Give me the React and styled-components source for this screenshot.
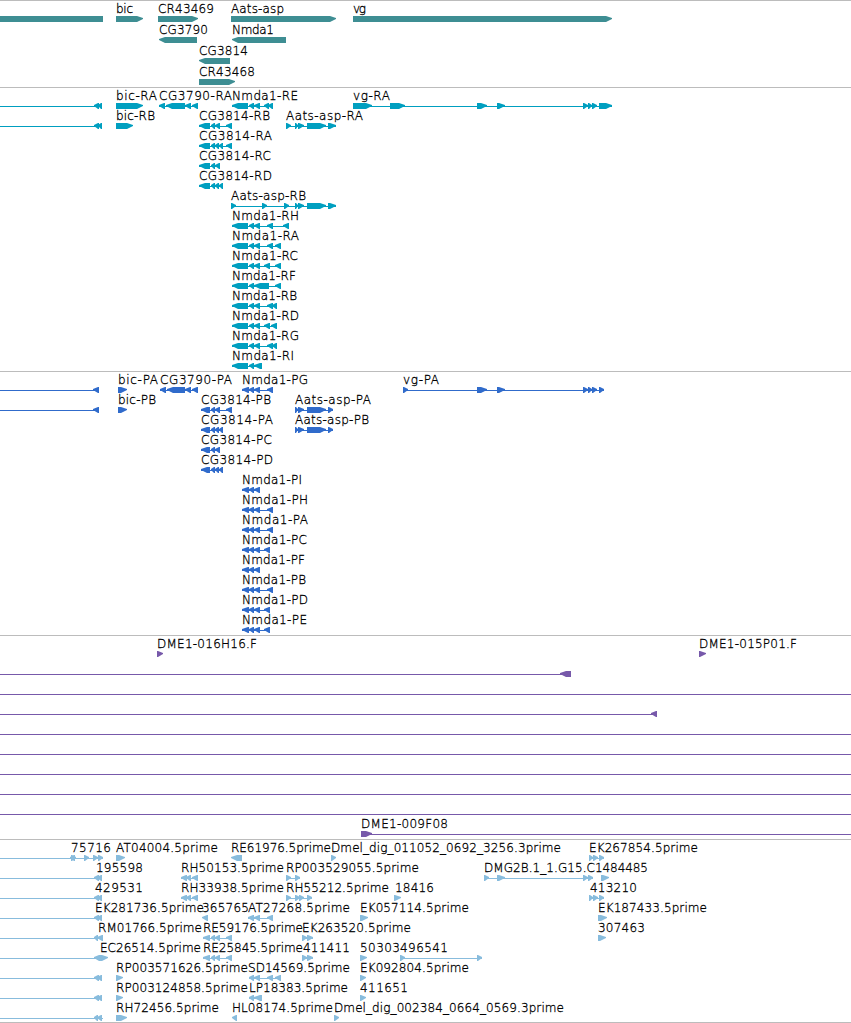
import styled, { createGlobalStyle } from "styled-components";

const GlobalStyle = createGlobalStyle`
  body {
    margin: 0;
    background: #fff;
    overflow: hidden;
  }
`;

const Browser = styled.main`
  display: flex;
  flex-direction: column;
  width: 851px;
  height: 1023px;
  box-sizing: border-box;
  overflow: hidden;
`;

const Track = styled.section`
  display: flex;
  flex-direction: column;
  flex: none;
  border-top: 1px solid #bcbcbc;
  padding-bottom: ${(props) => props.$gap}px;
  color: ${(props) => props.$color};
`;

const Row = styled.svg`
  display: block;
  flex: none;
  width: 851px;
  height: ${(props) => props.$height}px;
  overflow: visible;
`;

// the light face with a hairline stroke sits between ExtraLight and Book
const Label = styled.text`
  font-family: "DejaVu Sans", sans-serif;
  font-size: 12px;
  font-weight: 200;
  fill: #000;
  stroke: #000;
  stroke-width: 0.3px;
`;

const BottomRule = styled.div`
  flex: none;
  height: 1px;
  background: #bcbcbc;
`;

const L = "left";
const R = "right";
const NONE = "none";
const WIDTH = 851;

// label, label start, label end, direction, blocks, optional line extent
const f = (label, from, to, dir, blocks, line) => ({
  label,
  from,
  to,
  dir,
  blocks,
  line,
});

const bare = (dir, blocks, line) => f("", 0, 0, dir, blocks, line);

const genes = [
  [
    bare(NONE, [[0, 103]]),
    f("bic", 116, 133, R, [[116, 143]]),
    f("CR43469", 158, 214, R, [[158, 198]]),
    f("Aats-asp", 231, 284, R, [[231, 336]]),
    f("vg", 353, 366, R, [[353, 612]]),
  ],
  [
    f("CG3790", 159, 208, L, [[159, 197]]),
    f("Nmda1", 232, 274, L, [[232, 286]]),
  ],
  [f("CG3814", 199, 248, L, [[199, 230]])],
  [f("CR43468", 199, 255, R, [[199, 235]])],
];

const upstream = bare(L, [[94, 99], [98, 102]], [0, 102]);
const nmdaR = [[232, 248], [249, 254], [254, 260]];
const cgR = [[199, 210], [211, 215]];
const aatsTail = [[295, 298], [298, 304], [307, 326], [328, 336]];

const transcripts = [
  [
    upstream,
    f("bic-RA", 116, 157, R, [[116, 143]]),
    f("CG3790-RA", 159, 232, L, [[159, 165], [166, 185], [185, 191], [192, 198]]),
    f("Nmda1-RE", 232, 298, L, [...nmdaR, [264, 269], [268, 273]]),
    f("vg-RA", 353, 390, R, [
      [353, 372], [390, 405], [477, 487], [497, 505],
      [583, 588], [588, 592], [592, 597], [599, 612],
    ]),
  ],
  [
    upstream,
    f("bic-RB", 116, 155, R, [[116, 133]]),
    f("CG3814-RB", 199, 270, L, [...cgR, [215, 220], [226, 232]]),
    f("Aats-asp-RA", 286, 363, R, [[286, 291], ...aatsTail]),
  ],
  [f("CG3814-RA", 199, 272, L, [...cgR, [215, 219], [219, 223], [226, 232]])],
  [f("CG3814-RC", 199, 271, L, [...cgR, [215, 220]])],
  [f("CG3814-RD", 199, 272, L, [...cgR, [215, 219], [219, 223]])],
  [f("Aats-asp-RB", 231, 306, R, [[231, 236], [262, 267], [284, 289], ...aatsTail])],
  [f("Nmda1-RH", 232, 299, L, [...nmdaR, [267, 273], [283, 289]])],
  [f("Nmda1-RA", 232, 299, L, [...nmdaR, [267, 273], [275, 281]])],
  [f("Nmda1-RC", 232, 298, L, [...nmdaR, [264, 270], [275, 281]])],
  [f("Nmda1-RF", 232, 296, L, [[232, 248], [249, 254], [254, 269], [275, 281]])],
  [f("Nmda1-RB", 232, 297, L, [...nmdaR, [267, 273], [272, 277]])],
  [f("Nmda1-RD", 232, 299, L, [...nmdaR, [264, 270], [271, 277]])],
  [f("Nmda1-RG", 232, 299, L, [...nmdaR, [267, 273], [272, 277]])],
  [f("Nmda1-RI", 232, 294, L, [[232, 248], [249, 254], [254, 262]])],
];

const upstreamP = bare(L, [[93, 99]], [0, 99]);
const nmdaP = [[242, 249], [249, 254], [254, 260]];
const cgP = [[201, 210], [211, 215]];
const aatsP = [[295, 298], [298, 304], [307, 326], [328, 333]];

const proteins = [
  [
    upstreamP,
    f("bic-PA", 118, 158, R, [[118, 127]]),
    f("CG3790-PA", 160, 232, L, [[160, 166], [167, 185], [185, 191], [192, 198]]),
    f("Nmda1-PG", 242, 308, L, [...nmdaP, [267, 273]]),
    f("vg-PA", 403, 439, R, [
      [403, 408], [477, 487], [497, 505], [583, 588], [588, 592], [592, 597], [599, 604],
    ]),
  ],
  [
    upstreamP,
    f("bic-PB", 118, 156, R, [[118, 127]]),
    f("CG3814-PB", 201, 271, L, [...cgP, [215, 220], [226, 232]]),
    f("Aats-asp-PA", 295, 371, R, aatsP),
  ],
  [
    f("CG3814-PA", 201, 273, L, [...cgP, [215, 219], [219, 223]]),
    f("Aats-asp-PB", 295, 369, R, aatsP),
  ],
  [f("CG3814-PC", 201, 272, L, [...cgP, [215, 220]])],
  [f("CG3814-PD", 201, 273, L, [...cgP, [215, 219], [219, 223]])],
  [f("Nmda1-PI", 242, 302, L, nmdaP)],
  [f("Nmda1-PH", 242, 308, L, [...nmdaP, [267, 273]])],
  [f("Nmda1-PA", 242, 308, L, [...nmdaP, [267, 273]])],
  [f("Nmda1-PC", 242, 307, L, [...nmdaP, [264, 270]])],
  [f("Nmda1-PF", 242, 305, L, nmdaP)],
  [f("Nmda1-PB", 242, 306, L, [...nmdaP, [267, 273]])],
  [f("Nmda1-PD", 242, 308, L, [...nmdaP, [264, 270]])],
  [f("Nmda1-PE", 242, 307, L, [...nmdaP, [264, 270]])],
];

const through = [bare(NONE, [], [0, WIDTH])];

const clones = [
  [
    f("DME1-016H16.F", 157, 257, R, [[157, 163]]),
    f("DME1-015P01.F", 699, 797, R, [[699, 706]]),
  ],
  [bare(L, [[560, 571]], [0, 571])],
  through,
  [bare(L, [[651, 657]], [0, 657])],
  through,
  through,
  through,
  through,
  through,
  [f("DME1-009F08", 361, 448, R, [[361, 372]], [361, WIDTH])],
];

const estEnd = [[94, 99], [97, 102]];
const rh = [[181, 187], [186, 191], [192, 198]];
const re = [[203, 210], [211, 215], [215, 220], [226, 232]];
const ek = [[589, 593], [593, 598], [599, 604]];

const ests = [
  [
    bare(L, [[70, 75]], [0, 76]),
    f("75716", 71, 111, R, [[71, 76], [84, 89], [93, 98], [98, 103]]),
    f("AT04004.5prime", 116, 218, R, [[116, 125]]),
    f("RE61976.5prime", 231, 331, L, [[231, 242]]),
    f("Dmel_dig_011052_0692_3256.3prime", 331, 561, R, [[331, 336]]),
    f("EK267854.5prime", 589, 698, R, ek),
  ],
  [
    f("195598", 96, 143, L, estEnd, [0, 102]),
    f("RH50153.5prime", 181, 284, L, rh),
    f("RP003529055.5prime", 286, 419, R, [[286, 291], [295, 300]]),
    f("DMG2B.1_1.G15.C", 484, 595, R, [[484, 489], [497, 505], [583, 588], [588, 593]]),
    f("1484485", 595, 648, R, [[601, 609]]),
  ],
  [
    f("429531", 95, 143, L, estEnd, [0, 102]),
    f("RH33938.5prime", 181, 284, L, rh),
    f("RH55212.5prime", 286, 389, R, [[286, 291], [295, 300], [299, 304], [307, 312]]),
    f("18416", 395, 434, R, [[394, 401]]),
    f("413210", 590, 637, R, ek),
  ],
  [
    f("EK281736.5prime", 95, 204, L, estEnd, [0, 102]),
    f("365765", 202, 249, L, [[202, 208]]),
    f("AT27268.5prime", 248, 350, L, [[248, 254], [254, 260], [267, 273]]),
    f("EK057114.5prime", 360, 469, R, [[360, 368]]),
    f("EK187433.5prime", 598, 707, R, [[598, 607]]),
  ],
  [
    f("RM01766.5prime", 98, 202, L, [[94, 98], [97, 103]], [0, 103]),
    f("RE59176.5prime", 203, 303, L, re),
    f("EK263520.5prime", 302, 411, R, [[302, 307], [307, 313]]),
    f("307463", 598, 645, R, [[598, 606]]),
  ],
  [
    bare(L, [[94, 100]], [0, 100]),
    f("EC26514.5prime", 100, 201, R, [[99, 108]]),
    f("RE25845.5prime", 203, 303, L, re),
    f("411411", 303, 350, R, [[302, 307], [307, 313]]),
    f("50303", 360, 400, R, [[360, 367]]),
    f("496541", 400, 448, R, [[400, 405], [477, 482]]),
  ],
  [
    bare(L, estEnd, [0, 102]),
    f("RP003571626.5prime", 116, 248, R, [[116, 123]]),
    f("SD14569.5prime", 248, 350, L, [[249, 254], [254, 260], [267, 273], [275, 281]]),
    f("EK092804.5prime", 360, 469, R, [[360, 366]]),
  ],
  [
    bare(L, estEnd, [0, 102]),
    f("RP003124858.5prime", 116, 248, R, [[116, 123]]),
    f("LP18383.5prime", 249, 348, L, [[249, 254], [254, 262]]),
    f("411651", 360, 408, R, [[360, 366]]),
  ],
  [
    bare(L, [[94, 98], [97, 102]], [0, 103]),
    f("RH72456.5prime", 116, 219, R, [[116, 127]]),
    f("HL08174.5prime", 232, 333, L, [[232, 237]]),
    f("Dmel_dig_002384_0664_0569.3prime", 334, 564, R, [[334, 339]]),
  ],
];

const TOP = 15;
const MID = 18;
const BOTTOM = 21;

function Block({ dir, start, end }) {
  const head = Math.min(6, end - start - 1);
  let points = `${start},${TOP} ${end},${TOP} ${end},${BOTTOM} ${start},${BOTTOM}`;

  if (dir === R) {
    const neck = end - head;
    points = `${start},${TOP} ${neck},${TOP} ${end},${MID - 1} ${end},${MID} ${neck},${BOTTOM} ${start},${BOTTOM}`;
  }
  if (dir === L) {
    const neck = start + head;
    points = `${end},${TOP} ${neck},${TOP} ${start},${MID - 1} ${start},${MID} ${neck},${BOTTOM} ${end},${BOTTOM}`;
  }

  return <polygon points={points} fill="currentColor" />;
}

function Feature({ label, from, to, dir, blocks, line }) {
  const [x1, x2] = line || [blocks[0][0], blocks[blocks.length - 1][1]];
  // a lone block has no introns, so no connecting line
  const hasLine = line || blocks.length > 1;

  return (
    <g>
      {hasLine ? (
        <rect x={x1} y={MID} width={x2 - x1} height="1" fill="currentColor" />
      ) : null}
      {blocks.map(([start, end]) => (
        <Block key={start} dir={dir} start={start} end={end} />
      ))}
      {label ? (
        <Label x={from} y="12" textLength={to - from}>
          {label}
        </Label>
      ) : null}
    </g>
  );
}

function FeatureTrack({ color, rows, rowHeight = 20, gap = 3 }) {
  return (
    <Track $color={color} $gap={gap}>
      {rows.map((features, i) => (
        <Row key={i} $height={rowHeight}>
          {features.map((feature, j) => (
            <Feature key={j} {...feature} />
          ))}
        </Row>
      ))}
    </Track>
  );
}

export default function App() {
  return (
    <>
      <GlobalStyle />
      <Browser>
        <FeatureTrack color="#3e8e93" rows={genes} rowHeight={21} gap={2} />
        <FeatureTrack color="#009fc0" rows={transcripts} />
        <FeatureTrack color="#306bcb" rows={proteins} />
        <FeatureTrack color="#7759aa" rows={clones} />
        <FeatureTrack color="#88bcdd" rows={ests} gap={2} />
        <BottomRule />
      </Browser>
    </>
  );
}
